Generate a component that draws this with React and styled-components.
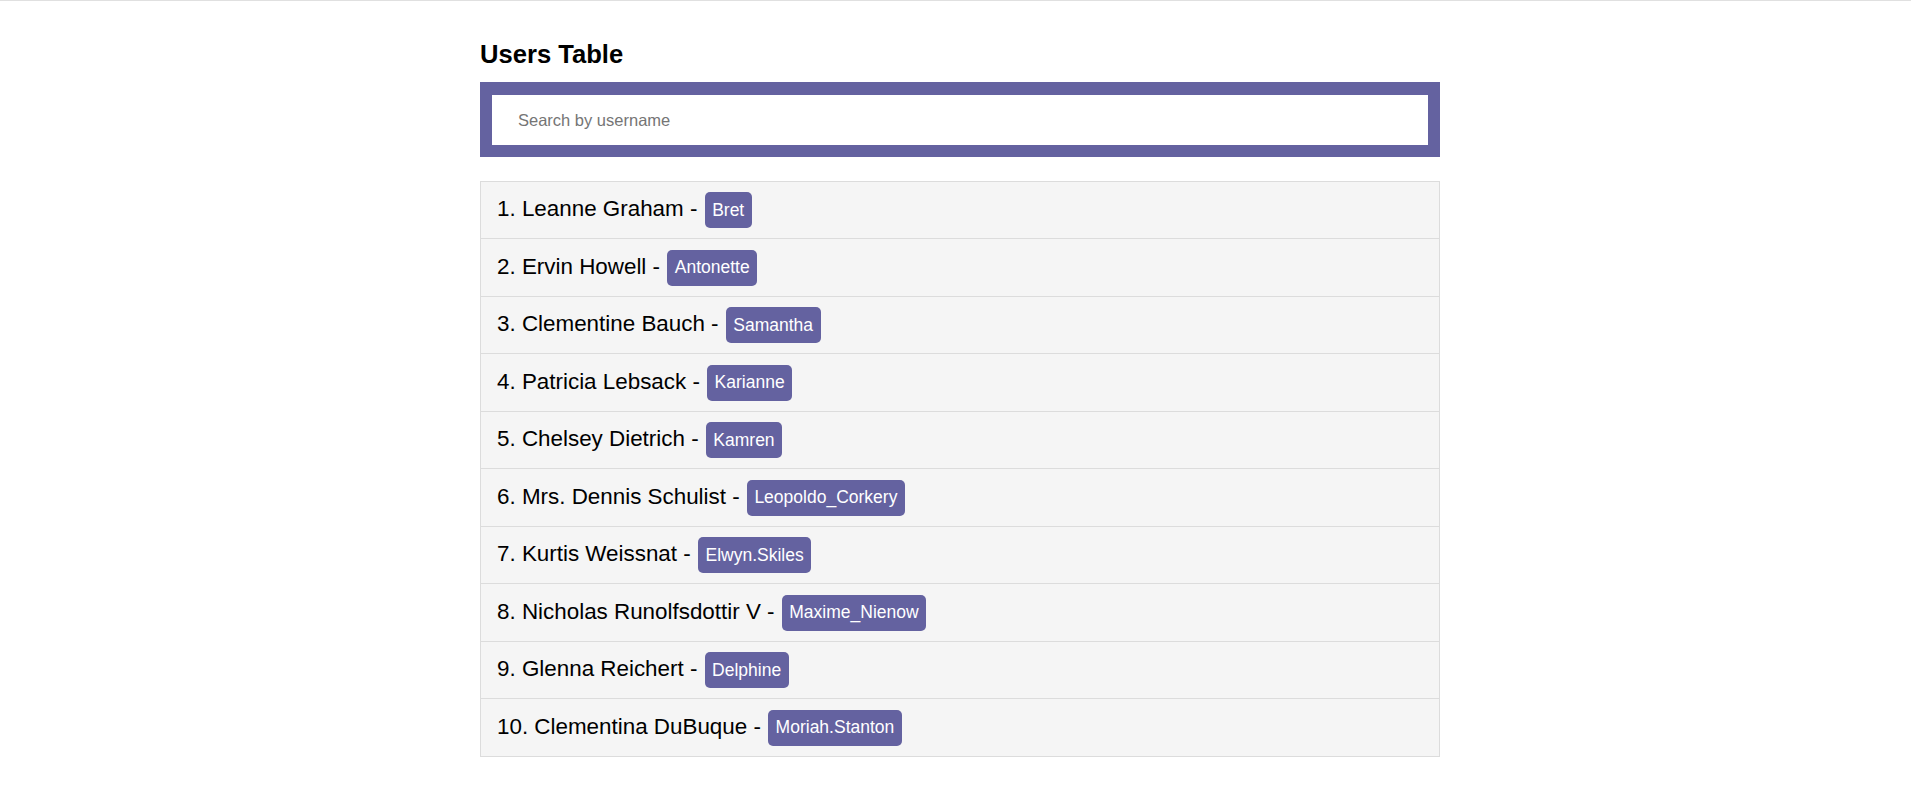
import styled, { createGlobalStyle } from "styled-components";

const users = [
  { id: 1, name: "Leanne Graham", username: "Bret" },
  { id: 2, name: "Ervin Howell", username: "Antonette" },
  { id: 3, name: "Clementine Bauch", username: "Samantha" },
  { id: 4, name: "Patricia Lebsack", username: "Karianne" },
  { id: 5, name: "Chelsey Dietrich", username: "Kamren" },
  { id: 6, name: "Mrs. Dennis Schulist", username: "Leopoldo_Corkery" },
  { id: 7, name: "Kurtis Weissnat", username: "Elwyn.Skiles" },
  { id: 8, name: "Nicholas Runolfsdottir V", username: "Maxime_Nienow" },
  { id: 9, name: "Glenna Reichert", username: "Delphine" },
  { id: 10, name: "Clementina DuBuque", username: "Moriah.Stanton" },
];

const GlobalStyle = createGlobalStyle`
  * {
    box-sizing: border-box;
  }

  body {
    margin: 0;
    border-top: 1px solid #e0e0e0;
    background: #fff;
    font-family: "Liberation Sans", Arial, sans-serif;
    color: #000;
  }
`;

const App = () => {
  return (
    <>
      <GlobalStyle />
      <StContainer>
        <StTitle>Users Table</StTitle>
        <StSearchForm onSubmit={(e) => e.preventDefault()}>
          <StSearchInput type="text" placeholder="Search by username" />
        </StSearchForm>
        <StUserList>
          {users.map((user) => (
            <StUserRow key={user.id}>
              {user.id}. {user.name} - <StBadge>{user.username}</StBadge>
            </StUserRow>
          ))}
        </StUserList>
      </StContainer>
    </>
  );
};

const StContainer = styled.div`
  width: 960px;
  margin: 0 0 0 480px;
  padding-bottom: 40px;
`;

const StTitle = styled.h1`
  margin: 39px 0 13px;
  font-size: 25.6px;
  font-weight: 700;
`;

const StSearchForm = styled.form`
  display: flex;
  padding: 13px 12px 12px 12px;
  background: #6462a0;
`;

const StSearchInput = styled.input`
  flex: 1;
  height: 50px;
  padding: 0 26px;
  border: none;
  outline: none;
  background: #fff;
  font-family: "Liberation Sans", Arial, sans-serif;
  font-size: 16.5px;
  color: #000;

  &::placeholder {
    color: #757575;
  }
`;

const StUserList = styled.ul`
  list-style: none;
  margin: 24px 0 0;
  padding: 0;
  border: 1px solid #dcdcdc;
  background: #f5f5f5;
`;

const StUserRow = styled.li`
  padding: 10.3px 16px 10.2px;
  font-size: 22.4px;
  border-bottom: 1px solid #dcdcdc;

  &:last-child {
    border-bottom: none;
  }
`;

const StBadge = styled.span`
  display: inline-block;
  margin-left: 1px;
  padding: 7.5px 7.5px;
  border-radius: 5px;
  background: #6462a0;
  color: #fff;
  font-size: 17.5px;
`;

export default App;
